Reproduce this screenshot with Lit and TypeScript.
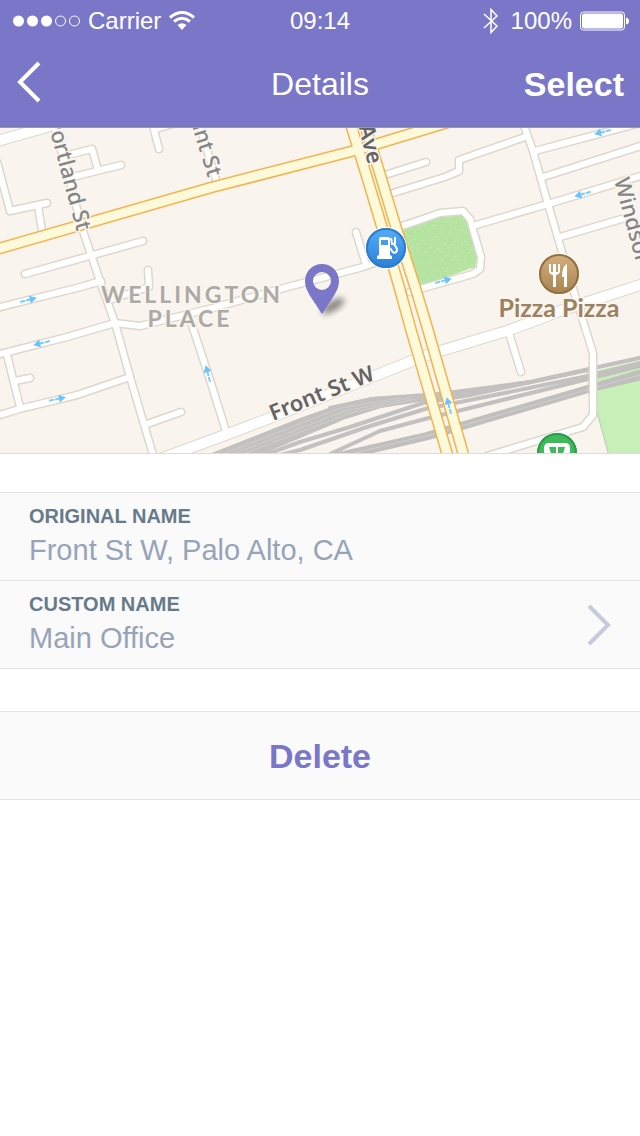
import { LitElement, html, svg, css } from "lit";
import { customElement, property } from "lit/decorators.js";

/* Minor streets, drawn twice: once as a casing and once as the white fill. */
const STREETS = [
  "M52 116L55 128L83 231L102 287L115 323L130 377L154 458",
  "M72 154L92 149L98 170",
  "M73 177L121 165",
  "M-3 162L10 211L47 203",
  "M38 206L42 231",
  "M159 149L153 126M155 129L180 122",
  "M198 120L217 183",
  "M25 274L143 241",
  "M-4 308L77 288L101 281",
  "M148 270L149 287L112 299",
  "M-4 355L67 337L115 323L140 326L213 308L280 289L363 267L388 258",
  "M356 232L366 265",
  "M7 355L20 407",
  "M15 381L30 378",
  "M-4 416L23 408L77 395L130 377",
  "M147 424L181 412",
  "M192 325L210 380L225 428",
  "M388 174L426 162",
  "M393 193L445 177L459 171L459 160L525 137",
  "M402 226L420 220L440 213L463 211L470 219L481 257L480 269L473 274L420 289L410 292",
  "M522 120L533 151L548 204L562 252L574 292L593 353L593 415L583 427L487 456",
  "M535 151L644 122",
  "M543 177L644 145",
  "M473 226L548 204L644 175",
  "M560 237L625 218",
  "M509 333L521 372",
];

const WIDE_STREETS = [
  "M-6 142L64 122",
  "M160 459L220 437L270 418L377 375L427 355L510 330L557 312L646 283",
];

const HIGHWAYS = ["M-6 250L213 187L357 150L446 123"];

const AVENUES = [
  "M350 122L366 174L381 224L400 290L411 330L449 460",
  "M364 122L380 174L395 224L416 290L428 330L465 460",
];

const RAILS = [
  "M330 408L372 399L423 396L470 390L530 382L644 357",
  "M252 456L300 436L345 417L380 406L425 399L530 382",
  "M262 456L300 442L350 427L423 403L470 395L588 370",
  "M276 456L300 450L367 427L425 409L470 400L588 376L644 362",
  "M330 454L380 431L425 419L470 408L588 379L644 365",
];

const RAIL_TRUNKS = [
  "M332 456L425 435L593 386L644 371",
  "M350 456L430 437L593 389L644 377",
];

/* Hairlines that separate the tracks inside the rail yard. */
const TRACK_GAPS = [
  "M218 456L340 408L400 398",
  "M228 456L345 411L410 398",
  "M238 456L350 413L415 399",
  "M342 456L430 435L593 388L644 374",
];

const ARROWS: Array<[number, number, number]> = [
  [28, 300, -14],
  [42, 343, 166],
  [57, 399, -12],
  [208, 374, -105],
  [603, 132, 166],
  [583, 194, 164],
  [443, 281, -15],
  [449, 406, -105],
];

@customElement("street-map")
class StreetMap extends LitElement {
  static styles = css`
    :host {
      display: block;
      border-bottom: 1px solid #dddddd;
    }
    svg {
      display: block;
      width: 100%;
      height: 325px;
    }
    .line {
      fill: none;
      stroke-linejoin: round;
      stroke-linecap: round;
    }
    .casing {
      stroke: #ddd7cd;
      stroke-width: 9px;
    }
    .fill {
      stroke: #ffffff;
      stroke-width: 6px;
    }
    .wide-casing {
      stroke: #ddd7cd;
      stroke-width: 12px;
    }
    .wide-fill {
      stroke: #ffffff;
      stroke-width: 10px;
    }
    .road-casing {
      stroke: #f3b44c;
      stroke-width: 12px;
    }
    .road-fill {
      stroke: #fdfadb;
      stroke-width: 9px;
    }
    .avenue-casing {
      stroke: #f3b44c;
      stroke-width: 12px;
    }
    .avenue-fill {
      stroke: #fdfadb;
      stroke-width: 9px;
    }
    .rail {
      stroke: #c2c1c0;
      stroke-width: 4px;
    }
    .trunk {
      stroke: #c0bfbe;
      stroke-width: 5px;
    }
    .gap {
      stroke: #d0cecb;
      stroke-width: 1px;
    }
    .name {
      font-family: "Noto Sans", "Open Sans", sans-serif;
      font-weight: 500;
      font-size: 22px;
      fill: #858585;
      stroke: #faf6f0;
      stroke-width: 3px;
      stroke-linejoin: round;
      paint-order: stroke;
    }
    .dark {
      fill: #666462;
      font-weight: 600;
    }
    .area {
      font-family: Lato, sans-serif;
      font-weight: 700;
      font-size: 23px;
      letter-spacing: 3px;
      fill: #acaaa6;
      stroke: #faf6f0;
      stroke-width: 3px;
      paint-order: stroke;
      text-anchor: middle;
    }
    .place {
      font-family: Lato, sans-serif;
      font-weight: 700;
      font-size: 25px;
      fill: #9b8260;
      stroke: #faf6f0;
      stroke-width: 3px;
      paint-order: stroke;
      text-anchor: middle;
    }
  `;

  private lines(paths: string[], cls: string) {
    return paths.map((d) => svg`<path class="line ${cls}" d=${d} />`);
  }

  render() {
    return html`
      <svg viewBox="0 128 640 325" preserveAspectRatio="xMidYMid slice" role="img" aria-label="Map around Front St W">
        <defs>
          <linearGradient id="blue" x1="0" y1="0" x2="0" y2="1">
            <stop offset="0" stop-color="#55adf8" />
            <stop offset="1" stop-color="#2b7fd8" />
          </linearGradient>
          <linearGradient id="brown" x1="0" y1="0" x2="0" y2="1">
            <stop offset="0" stop-color="#d4ae7d" />
            <stop offset="1" stop-color="#a98453" />
          </linearGradient>
          <filter id="soft" x="-50%" y="-50%" width="200%" height="200%">
            <feGaussianBlur stdDeviation="3" />
          </filter>
          <pattern id="grass" width="14" height="12" patternUnits="userSpaceOnUse" patternTransform="rotate(-15)">
            <rect width="14" height="12" fill="#b5e3a0" />
            <path d="M1 3l3-1M8 5l3 1M4 9l2-2M11 10l2-1M12 2l1 1" stroke="#c8ebb6" stroke-width="1" />
          </pattern>
        </defs>

        <rect x="-1000" y="128" width="2640" height="326" fill="#f9f4ed" />
        <path d="M586 373L646 359V460H610L597 412V386H588Z" fill="#c7efb7" />
        <path d="M597 412L610 460" stroke="#b9cdb0" fill="none" />
        <path d="M402 230L440 217L461 215L467 221L477 258L475 267L418 287Z" fill="url(#grass)" />

        <path d="M204 456L300 418L337 405L372 397L425 393V400L380 408L345 419L300 438L258 456Z" fill="#c2c1c0" />
        ${this.lines(RAILS, "rail")} ${this.lines(RAIL_TRUNKS, "trunk")} ${this.lines(TRACK_GAPS, "gap")}
        ${this.lines(STREETS, "casing")} ${this.lines(WIDE_STREETS, "wide-casing")}
        ${this.lines(STREETS, "fill")} ${this.lines(WIDE_STREETS, "wide-fill")}
        ${this.lines(HIGHWAYS, "road-casing")} ${this.lines(AVENUES, "avenue-casing")}
        ${this.lines(HIGHWAYS, "road-fill")} ${this.lines(AVENUES, "avenue-fill")}

        ${ARROWS.map(
          ([x, y, turn]) => svg`
            <g transform="translate(${x} ${y}) rotate(${turn})">
              <path d="M-8 0H4" stroke="#7accff" stroke-width="2" stroke-dasharray="5 1" />
              <path d="M2 -4L9 0L2 4Z" fill="#6ac3ff" />
            </g>
          `
        )}

        <text class="name" transform="translate(77 232) rotate(75)" text-anchor="end">Portland St</text>
        <text class="name" transform="translate(208 178) rotate(73)" text-anchor="end">Grant St</text>
        <text class="name dark" transform="translate(368 165) rotate(76)" text-anchor="end">Ave</text>
        <text class="name" transform="translate(614 180) rotate(75)">Windsor</text>
        <text class="name dark" transform="translate(273 421) rotate(-22)">Front St W</text>
        <text class="area"><tspan x="192" y="303">WELLINGTON</tspan><tspan x="190" y="327">PLACE</tspan></text>
        <text class="place" x="559" y="317">Pizza Pizza</text>

        <g transform="translate(386 248)">
          <circle r="21" fill="#ffffff" />
          <circle r="20" fill="url(#blue)" />
          <circle r="19" fill="none" stroke="#2f7ccb" stroke-width="2" />
          <path
            d="M-7 7V-9Q-7 -11 -5 -11H2Q4 -11 4 -9V7L6 8V11H-9V8ZM-5 -8V-3H2V-8Z"
            fill="#ffffff" fill-rule="evenodd"
          />
          <path d="M4 0L6 3Q8 6 10 4Q12 2 10 -1L8 -4H5M5 -10L6 -5M9 -11L9 -4" fill="none" stroke="#ffffff" stroke-width="2" />
        </g>

        <g transform="translate(559 274)">
          <circle r="21" fill="#ffffff" />
          <circle r="20" fill="url(#brown)" />
          <circle r="19" fill="none" stroke="#94713f" stroke-width="2" />
          <path d="M-10 -10V-3Q-10 0 -6 1V13H-3V1Q1 0 1 -3V-10H-1V-2H-3V-10H-6V-2H-8V-10Z" fill="#ffffff" />
          <path d="M8 -10V13H5V3H3Q3 -8 8 -10Z" fill="#ffffff" />
        </g>

        <g transform="translate(557 453)">
          <circle r="21" fill="#ffffff" />
          <circle r="20" fill="#3fba5b" />
          <circle r="19" fill="none" stroke="#2d9c48" stroke-width="2" />
          <path d="M-13 4V-5Q-13 -10 -8 -10H8Q13 -10 13 -5V4Z" fill="#ffffff" />
          <path d="M-8 -6H-1V4H-5ZM1 -6H8L5 4H1Z" fill="#3fba5b" />
        </g>

        <ellipse cx="333" cy="306" rx="13" ry="5" transform="rotate(-32 333 306)" fill="#000000" opacity="0.45" filter="url(#soft)" />
        <path
          d="M322 264C331 264 339 271 339 281C339 291 332 298 322 314C312 298 305 291 305 281C305 271 313 264 322 264ZM322 272A9 9 0 1 0 322 290A9 9 0 1 0 322 272Z"
          fill="#7a77c8" fill-rule="evenodd"
        />
      </svg>
    `;
  }
}

@customElement("status-bar")
class StatusBar extends LitElement {
  @property() carrier = "Carrier";
  @property() time = "09:14";
  @property() charge = "100%";

  static styles = css`
    :host {
      display: grid;
      grid-template-columns: 1fr auto 1fr;
      align-items: center;
      box-sizing: border-box;
      height: 40px;
      padding: 2px 11px 0;
      color: #ffffff;
      font-size: 24px;
      line-height: 38px;
    }
    .side {
      display: flex;
      align-items: center;
      gap: 8px;
    }
    .end {
      justify-content: flex-end;
    }
    .bluetooth {
      margin-right: 4px;
    }
    svg {
      display: block;
      fill: none;
      stroke: #ffffff;
    }
    .solid {
      fill: #ffffff;
      stroke: none;
    }
  `;

  render() {
    return html`
      <div class="side">
        <svg width="69" height="12" viewBox="0 0 69 12" role="img" aria-label="Signal: 3 of 5">
          ${[0, 1, 2, 3, 4].map((i) =>
            i < 3
              ? svg`<circle class="solid" cx=${7.5 + i * 14} cy="6" r="5.500" />`
              : svg`<circle cx=${7.5 + i * 14} cy="6" r="5" />`
          )}
        </svg>
        <span>${this.carrier}</span>
        <svg width="26" height="20" viewBox="0 0 26 20" role="img" aria-label="Wi-Fi">
          <path d="M1 6.500Q13 -3.500 25 6.500" stroke-width="3" />
          <path d="M5 10.500Q13 4 21 10.500" stroke-width="3" />
          <path class="solid" d="M8.500 14Q13 10.500 17.500 14L13 19Z" />
        </svg>
      </div>
      <span>${this.time}</span>
      <div class="side end">
        <svg class="bluetooth" width="16" height="28" viewBox="0 0 16 28" role="img" aria-label="Bluetooth">
          <path d="M1 7L14 19L8 25.500V2.500L14 9L1 21" stroke-width="1.500" />
        </svg>
        <span>${this.charge}</span>
        <svg width="49" height="20" viewBox="0 0 49 20" role="img" aria-label="Battery full">
          <rect x="0.500" y="1" width="44" height="18" rx="3" />
          <rect class="solid" x="2" y="2.500" width="41" height="15" rx="2" />
          <path class="solid" d="M46 6.500Q49 7 49 10T46 13.500Z" />
        </svg>
      </div>
    `;
  }
}

@customElement("app-root")
class AppRoot extends LitElement {
  static styles = css`
    :host {
      display: block;
      min-height: 100vh;
      background: #ffffff;
      font-family: "Liberation Sans", Arial, sans-serif;
    }
    header {
      background: #7a77c8;
      border-bottom: 1px solid #9a99ae;
    }
    nav {
      display: grid;
      grid-template-columns: 1fr auto 1fr;
      align-items: center;
      height: 87px;
      padding: 0 16px;
      color: #ffffff;
    }
    h1 {
      margin: 0;
      font-size: 32px;
      font-weight: 400;
      line-height: 40px;
    }
    button {
      margin: 0;
      padding: 0;
      border: 0;
      background: none;
      color: inherit;
      font: inherit;
      text-align: left;
      cursor: pointer;
    }
    .back {
      justify-self: start;
      padding-bottom: 4px;
    }
    .select {
      justify-self: end;
      font-size: 34px;
      font-weight: 700;
      line-height: 40px;
    }
    .chevron {
      display: block;
      fill: none;
      stroke: currentColor;
      stroke-width: 4px;
    }
    .group {
      margin-top: 38px;
      border-bottom: 1px solid #e3e3e5;
    }
    .row {
      display: flex;
      align-items: center;
      justify-content: space-between;
      box-sizing: border-box;
      width: 100%;
      padding: 11px 29px;
      border-top: 1px solid #e3e3e5;
      background: #fafafa;
    }
    .text {
      display: flex;
      flex-direction: column;
      gap: 4px;
    }
    .label {
      color: #667a8a;
      font-size: 20px;
      font-weight: 700;
      line-height: 24px;
    }
    .value {
      color: #97a4b8;
      font-size: 29px;
      line-height: 37px;
    }
    .more {
      color: #c5cbd8;
    }
    .actions {
      margin-top: 42px;
    }
    .delete {
      justify-content: center;
      padding: 24px 29px 23px;
      color: #7a77c8;
      font-size: 34px;
      font-weight: 700;
      line-height: 40px;
    }
  `;

  render() {
    return html`
      <header>
        <status-bar></status-bar>
        <nav>
          <button class="back" aria-label="Back">
            <svg class="chevron" width="26" height="42" viewBox="0 0 26 42"><path d="M23 2L4 21L23 40" /></svg>
          </button>
          <h1>Details</h1>
          <button class="select">Select</button>
        </nav>
      </header>
      <main>
        <street-map></street-map>
        <section class="group">
          <div class="row">
            <span class="text">
              <span class="label">ORIGINAL NAME</span>
              <span class="value">Front St W, Palo Alto, CA</span>
            </span>
          </div>
          <button class="row">
            <span class="text">
              <span class="label">CUSTOM NAME</span>
              <span class="value">Main Office</span>
            </span>
            <svg class="chevron more" width="24" height="42" viewBox="0 0 24 42"><path d="M2 2L21 21L2 40" /></svg>
          </button>
        </section>
        <section class="group actions">
          <button class="row delete">Delete</button>
        </section>
      </main>
    `;
  }
}
